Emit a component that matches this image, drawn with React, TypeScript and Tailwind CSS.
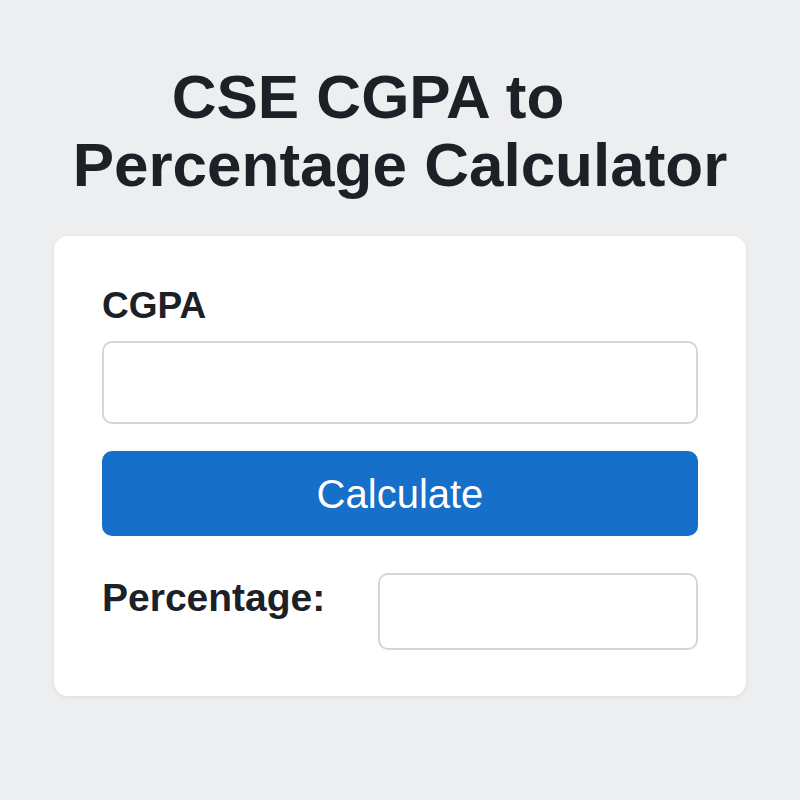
import { useState } from 'react'

export default function App() {
  const [cgpa, setCgpa] = useState('')
  const [percentage, setPercentage] = useState('')

  const handleCalculate = () => {
    const value = parseFloat(cgpa)
    if (isNaN(value)) {
      setPercentage('')
      return
    }
    setPercentage(((value - 0.75) * 10).toFixed(2) + '%')
  }

  return (
    <div className="min-h-screen w-full bg-[#edeef0] font-['Liberation_Sans',Arial,sans-serif] text-[#1c2127]">
      <div className="pt-[63px]">
        <h1 className="text-center text-[62px] font-bold leading-[68px]">
          CSE CGPA to<span className="inline-block w-[64px]" />
          <br />
          Percentage Calculator
        </h1>
      </div>

      <div className="mx-[54px] mt-[37px] rounded-[14px] bg-white px-[48px] pt-[51px] pb-[46px] shadow-[0_1px_4px_rgba(0,0,0,0.08)]">
        <label htmlFor="cgpa" className="block text-[37px] font-bold leading-none">
          CGPA
        </label>
        <input
          id="cgpa"
          type="text"
          value={cgpa}
          onChange={e => setCgpa(e.target.value)}
          className="mt-[17px] block h-[83px] w-full rounded-[10px] border-2 border-[#d6d6d6] bg-white px-4 text-[32px] outline-none"
        />

        <button
          type="button"
          onClick={handleCalculate}
          className="mt-[27px] flex h-[85px] w-full items-center justify-center rounded-[10px] bg-[#166fc8] text-[40px] leading-none text-white"
        >
          Calculate
        </button>

        <div className="mt-[37px] flex items-start justify-between">
          <span className="mt-[5px] text-[39px] font-bold leading-none">Percentage:</span>
          <div className="flex h-[77px] w-[320px] items-center rounded-[10px] border-2 border-[#d6d6d6] px-4 text-[28px]">
            {percentage}
          </div>
        </div>
      </div>
    </div>
  )
}
